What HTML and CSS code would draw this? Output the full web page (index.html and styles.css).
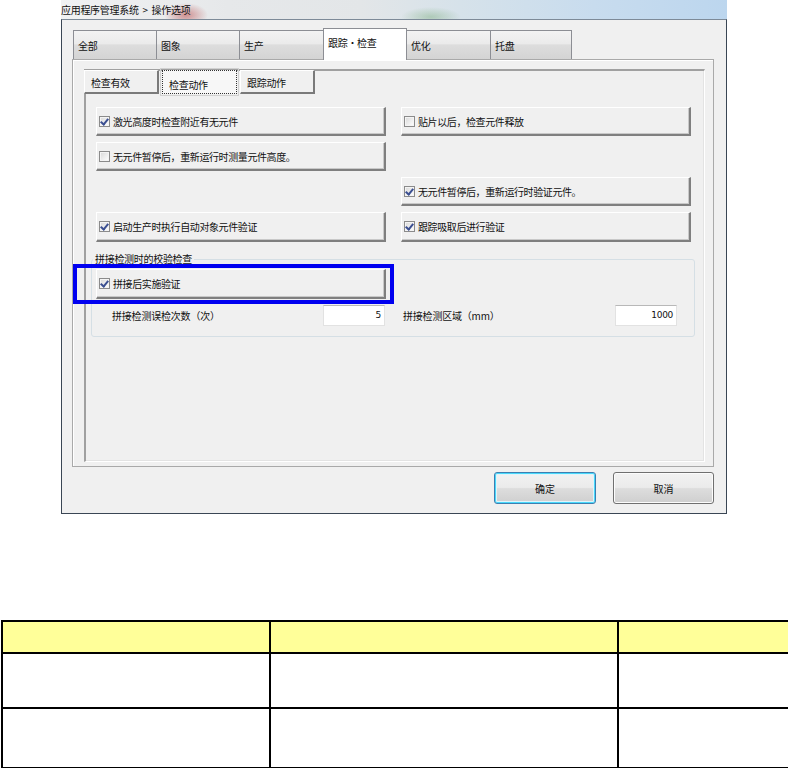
FILE: index.html
```html
<!DOCTYPE html>
<html lang="zh-CN">
<head>
<meta charset="utf-8">
<title>操作选项</title>
<link rel="stylesheet" href="styles.css">
</head>
<body>
<div class="page">
  <div class="window">
    <div class="titlebar"><span class="title">应用程序管理系统  &gt;  操作选项</span></div>
    <div class="frame">
      <div class="tabs">
        <div class="tab t83">全部</div>
        <div class="tab t83">图象</div>
        <div class="tab t84">生产</div>
        <div class="tab t84 active">跟踪・检查</div>
        <div class="tab t83">优化</div>
        <div class="tab t82">托盘</div>
      </div>
      <div class="panel">
        <div class="inner">
          <div class="subtabs">
            <div class="subtab">检查有效</div>
            <div class="subtab pressed">检查动作</div>
            <div class="subtab">跟踪动作</div>
          </div>
          <div class="opts">
            <div class="opt c1 r1"><span class="cb on"></span>激光高度时检查附近有无元件</div>
            <div class="opt c2 r1"><span class="cb"></span>贴片以后，检查元件释放</div>
            <div class="opt c1 r2"><span class="cb"></span>无元件暂停后，重新运行时测量元件高度。</div>
            <div class="opt c2 r3"><span class="cb on"></span>无元件暂停后，重新运行时验证元件。</div>
            <div class="opt c1 r4"><span class="cb on"></span>启动生产时执行自动对象元件验证</div>
            <div class="opt c2 r4"><span class="cb on"></span>跟踪吸取后进行验证</div>
          </div>
          <fieldset class="group">
            <legend>拼接检测时的校验检查</legend>
            <div class="hl-wrap">
              <div class="opt"><span class="cb on"></span>拼接后实施验证</div>
              <span class="highlight"></span>
            </div>
            <div class="fields">
              <div class="field f1"><span class="flabel">拼接检测误检次数（次）</span><span class="num">5</span></div>
              <div class="field f2"><span class="flabel">拼接检测区域（mm）</span><span class="num">1000</span></div>
            </div>
          </fieldset>
        </div>
      </div>
      <div class="actions">
        <button class="btn default">确定</button>
        <button class="btn">取消</button>
      </div>
    </div>
  </div>
  <table class="grid">
    <tr class="head"><td class="col1"></td><td class="col2"></td><td class="col3"></td></tr>
    <tr class="row1"><td></td><td></td><td></td></tr>
    <tr class="row2"><td></td><td></td><td></td></tr>
  </table>
</div>
</body>
</html>
```
FILE: styles.css
```css
* { box-sizing: border-box; }
html, body { margin: 0; padding: 0; background: #ffffff; }
body {
  font-family: "Noto Sans CJK SC", "Liberation Sans", sans-serif;
  font-size: 10px;
  color: #111;
}
.page { width: 788px; height: 768px; }

.window { margin-left: 61px; width: 666px; }
.titlebar {
  height: 19px;
  display: flex;
  align-items: center;
  background:
    radial-gradient(ellipse 22px 12px at 125px 15px, rgba(185,70,70,0.55), rgba(185,70,70,0) 100%),
    radial-gradient(ellipse 30px 10px at 370px 17px, rgba(110,165,110,0.4), rgba(110,165,110,0) 100%),
    linear-gradient(to right, #f1f2f3 0%, #e6e8ea 25%, #e3e6e8 45%, #d6e2ea 60%, #c8dcee 80%, #bcd6ee 100%);
}
.title { font-size: 10px; line-height: 17px; color: #111; letter-spacing: -0.3px; white-space: pre; }

.frame {
  height: 495px;
  background: #f0f0f0;
  border: 1px solid #3a4654;
  border-top-color: #7d8a98;
  padding: 10px 12px 0 10px;
}

.tabs { display: flex; height: 29px; padding-left: 1px; align-items: flex-end; }
.tab {
  height: 29px;
  border: 1px solid #8c8e94;
  border-bottom: none;
  border-right-width: 0;
  background: linear-gradient(to bottom, #f3f3f3 0%, #ebebeb 45%, #dddddd 50%, #d4d4d4 100%);
  padding: 7px 0 0 4px;
  line-height: 15px;
  letter-spacing: -0.3px;
}
.tab:last-child { border-right-width: 1px; }
.t82 { width: 82px; } .t83 { width: 83px; } .t84 { width: 84px; }
.tab.active {
  height: 32px;
  margin-bottom: -1px;
  background: #ffffff;
  border-color: #8c8e94;
  border-right-width: 1px;
  padding-top: 6px;
  position: relative;
  z-index: 1;
}
.tab.active + .tab { border-left-width: 0; }

.panel {
  height: 408px;
  border: 1px solid #a9a9a9;
  background: #f0f0f0;
  box-shadow: inset 1px 1px 0 #ffffff;
  padding: 9px 8px 4px 11px;
}
.inner {
  height: 393px;
  border-top: 2px solid #a0a0a0;
  border-left: 2px solid #a0a0a0;
  border-right: 1px solid #ffffff;
  border-bottom: 1px solid #ffffff;
  box-shadow: inset -1px -1px 0 #e3e3e3;
  padding: 0 0 0 10px;
}

.subtabs { display: flex; margin: -1px 0 0 -12px; height: 24px; }
.subtab {
  width: 75px;
  height: 24px;
  margin-right: 3px;
  background: #f0f0f0;
  border-top: 1px solid #ffffff;
  border-left: 1px solid #ffffff;
  border-right: 2px solid #7a7a7a;
  border-bottom: 2px solid #7a7a7a;
  padding: 4px 0 0 6px;
  line-height: 15px;
  letter-spacing: -0.3px;
}
.subtab.pressed {
  background: #f7f7f7;
  border: 1px dotted #333;
  outline: 1px solid #d0d0d0;
  outline-offset: 1px;
  padding-top: 6px;
}

.opts {
  margin-top: 13px;
  display: grid;
  grid-template-columns: 290px 290px;
  grid-template-rows: 29px 29px 29px 30px;
  column-gap: 15px;
  row-gap: 6px;
}
.c1 { grid-column: 1; } .c2 { grid-column: 2; }
.r1 { grid-row: 1; } .r2 { grid-row: 2; } .r3 { grid-row: 3; } .r4 { grid-row: 4; }

.opt {
  display: flex;
  align-items: center;
  height: 100%;
  background: #f0f0f0;
  border-top: 1px solid #ffffff;
  border-left: 1px solid #ffffff;
  border-right: 2px solid #7f7f7f;
  border-bottom: 2px solid #7f7f7f;
  box-shadow: inset -1px -1px 0 #c8c8c8;
  padding-left: 2px;
  white-space: nowrap;
  letter-spacing: -0.4px;
}
.cb {
  width: 11px;
  height: 11px;
  margin-right: 3px;
  border: 1px solid #8b8b8b;
  background: linear-gradient(135deg, #d8d8d8, #f4f4f4 70%, #ffffff);
  box-shadow: inset 0 0 0 1px #f4f4f4;
  position: relative;
  flex: none;
}
.cb.on::after {
  content: "";
  position: absolute;
  left: 2px;
  top: 0px;
  width: 3px;
  height: 6px;
  border-right: 2px solid #3b4f91;
  border-bottom: 2px solid #3b4f91;
  transform: rotate(40deg);
}

.group {
  margin: 9px 0 0 -5px;
  width: 604px;
  border: 1px solid #d5dfe5;
  border-radius: 3px;
  padding: 2px 0 10px 4px;
}
.group legend { padding: 0 2px; margin-left: -3px; line-height: 16px; letter-spacing: -0.3px; }
.hl-wrap { position: relative; width: 290px; height: 30px; }
.highlight {
  position: absolute;
  left: -23px;
  top: -5px;
  right: -8px;
  bottom: -5px;
  border: 4px solid #0000f0;
  pointer-events: none;
}
.fields { display: flex; margin-top: 6px; height: 21px; }
.field { display: flex; align-items: center; justify-content: space-between; height: 21px; }
.f1 { width: 289px; padding-left: 16px; }
.f2 { width: 276px; margin-left: 16px; padding-left: 2px; }
.flabel { letter-spacing: -0.2px; }
.num {
  width: 62px;
  height: 21px;
  background: #ffffff;
  border: 1px solid #e2e2e2;
  border-top-color: #b8b8b8;
  text-align: right;
  padding-right: 3px;
  line-height: 19px;
  font-family: "DejaVu Sans", sans-serif;
  font-size: 9px;
  letter-spacing: -0.3px;
}

.actions { display: flex; justify-content: flex-end; gap: 17px; margin-top: 5px; }
.btn {
  width: 101px;
  height: 32px;
  border: 1px solid #707070;
  border-radius: 3px;
  background: linear-gradient(to bottom, #f2f2f2 0%, #ebebeb 48%, #dddddd 52%, #cfcfcf 100%);
  box-shadow: inset 0 0 0 1px #fcfcfc;
  font-family: "Noto Sans CJK SC", sans-serif;
  font-size: 10px;
  color: #111;
  padding: 0;
}
.btn.default {
  width: 102px;
  border-color: #3c7fb1;
  box-shadow: inset 0 0 0 1px #48d8fb, inset 0 0 0 2px #dff4fb;
}

.grid {
  margin: 106px 0 0 1px;
  border-collapse: collapse;
  table-layout: fixed;
  width: 787px;
}
.grid td { border: 2px solid #000; padding: 0; }
.col1 { width: 268px; } .col2 { width: 348px; } .col3 { width: 171px; }
.head td { background: #ffff99; height: 32px; }
.row1 td { height: 55px; }
.row2 td { height: 60px; }
```
